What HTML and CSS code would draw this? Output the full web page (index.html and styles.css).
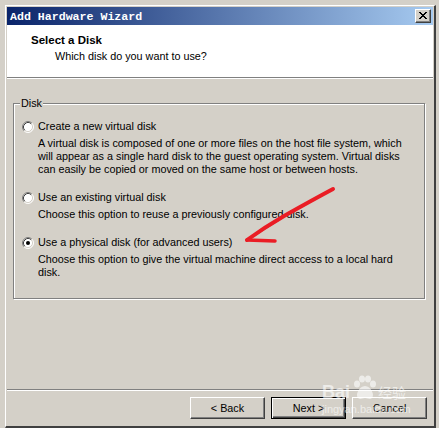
FILE: index.html
```html
<!DOCTYPE html>
<html>
<head>
<meta charset="utf-8">
<link rel="stylesheet" href="styles.css">
</head>
<body>
<div class="desktop">
  <div class="window">
    <div class="titlebar">
      <span class="title">Add Hardware Wizard</span>
      <span class="close">
        <svg width="8" height="7" viewBox="0 0 8 7" shape-rendering="crispEdges">
          <path d="M0 0h2v1h1v1h2v-1h1v-1h2v1h-1v1h-1v1h-1v1h1v1h1v1h1v1h-2v-1h-1v-1h-2v1h-1v1h-2v-1h1v-1h1v-1h1v-1h-1v-1h-1v-1h-1z" fill="#000"/>
        </svg>
      </span>
    </div>
    <div class="header">
      <div class="h-title">Select a Disk</div>
      <div class="h-sub">Which disk do you want to use?</div>
    </div>
    <div class="content">
      <fieldset class="group">
        <legend class="legend">Disk</legend>
        <div class="option">
          <div class="opt-row">
            <svg class="radio" width="12" height="12" viewBox="0 0 12 12">
              <circle cx="6" cy="6" r="5" fill="#fff"/>
              <path d="M2.11 9.89A5.5 5.5 0 0 1 9.89 2.11" stroke="#808080" fill="none"/>
              <path d="M9.89 2.11A5.5 5.5 0 0 1 2.11 9.89" stroke="#fff" fill="none"/>
              <path d="M2.82 9.18A4.5 4.5 0 0 1 9.18 2.82" stroke="#404040" fill="none"/>
              <path d="M9.18 2.82A4.5 4.5 0 0 1 2.82 9.18" stroke="#d4d0c8" fill="none"/>
            </svg>
            <span>Create a new virtual disk</span>
          </div>
          <p class="desc">A virtual disk is composed of one or more files on the host file system, which<br>will appear as a single hard disk to the guest operating system. Virtual disks<br>can easily be copied or moved on the same host or between hosts.</p>
        </div>
        <div class="option">
          <div class="opt-row">
            <svg class="radio" width="12" height="12" viewBox="0 0 12 12">
              <circle cx="6" cy="6" r="5" fill="#fff"/>
              <path d="M2.11 9.89A5.5 5.5 0 0 1 9.89 2.11" stroke="#808080" fill="none"/>
              <path d="M9.89 2.11A5.5 5.5 0 0 1 2.11 9.89" stroke="#fff" fill="none"/>
              <path d="M2.82 9.18A4.5 4.5 0 0 1 9.18 2.82" stroke="#404040" fill="none"/>
              <path d="M9.18 2.82A4.5 4.5 0 0 1 2.82 9.18" stroke="#d4d0c8" fill="none"/>
            </svg>
            <span>Use an existing virtual disk</span>
          </div>
          <p class="desc">Choose this option to reuse a previously configured disk.</p>
        </div>
        <div class="option">
          <div class="opt-row">
            <svg class="radio" width="12" height="12" viewBox="0 0 12 12">
              <circle cx="6" cy="6" r="5" fill="#fff"/>
              <path d="M2.11 9.89A5.5 5.5 0 0 1 9.89 2.11" stroke="#808080" fill="none"/>
              <path d="M9.89 2.11A5.5 5.5 0 0 1 2.11 9.89" stroke="#fff" fill="none"/>
              <path d="M2.82 9.18A4.5 4.5 0 0 1 9.18 2.82" stroke="#404040" fill="none"/>
              <path d="M9.18 2.82A4.5 4.5 0 0 1 2.82 9.18" stroke="#d4d0c8" fill="none"/>
              <circle cx="6" cy="6" r="2" fill="#000"/>
            </svg>
            <span>Use a physical disk (for advanced users)</span>
          </div>
          <p class="desc">Choose this option to give the virtual machine direct access to a local hard<br>disk.</p>
        </div>
      </fieldset>
    </div>
    <div class="footer">
      <span class="btn">&lt; Back</span>
      <span class="btn btn-default">Next &gt;</span>
      <span class="btn">Cancel</span>
    </div>
  </div>

  <svg class="arrow" width="439" height="428" viewBox="0 0 439 428">
    <path d="M333 189 C318 197 300 207 284 216 C272 223 258 232 247 240" stroke="#ea1d25" stroke-width="4" fill="none" stroke-linecap="round" stroke-linejoin="round"/>
    <path d="M322 195 C306 204 292 211 278 220 C270 225 262 230 256 234" stroke="#ea1d25" stroke-width="2.5" fill="none" stroke-linecap="round"/>
    <path d="M247 240 L275 241" stroke="#ea1d25" stroke-width="3.5" fill="none" stroke-linecap="round"/>
  </svg>

  <div class="watermark">
    <div class="wm-top">
      <span class="wm-bai">Bai</span>
      <svg class="wm-paw" width="26" height="26" viewBox="0 0 26 26">
        <ellipse cx="6" cy="9" rx="3" ry="3.6" fill="#fff"/>
        <ellipse cx="11" cy="4" rx="3" ry="3.6" fill="#fff"/>
        <ellipse cx="17" cy="4" rx="3" ry="3.6" fill="#fff"/>
        <ellipse cx="22" cy="9" rx="3" ry="3.6" fill="#fff"/>
        <path d="M14 11 C8 11 4 20 7 23 C9 25 12 23 14 23 C16 23 19 25 21 23 C24 20 20 11 14 11Z" fill="#fff"/>
      </svg>
      <span class="wm-cn">经验</span>
    </div>
    <div class="wm-url">jingyan.baidu.com</div>
  </div>
</div>
</body>
</html>
```
FILE: styles.css
```css
* { box-sizing: border-box; }

body {
  margin: 0;
  background: #d4d0c8;
  font-family: "Liberation Sans", Arial, sans-serif;
  font-size: 10.8px;
  color: #000;
}

.desktop {
  position: relative;
  width: 439px;
  height: 428px;
  overflow: hidden;
  background: #d4d0c8;
  padding: 5px 0 0 5px;
}

.window {
  width: 431px;
  height: 423px;
  background: #d4d0c8;
  border-style: solid;
  border-width: 1px 2px 2px 1px;
  border-color: #fff #404040 #404040 #fff;
  padding: 1px;
  display: flex;
  flex-direction: column;
}

.titlebar {
  height: 18px;
  flex: none;
  display: flex;
  align-items: center;
  background: linear-gradient(to right, #0a246a, #a6caf0);
  padding-left: 3px;
}

.title {
  font-family: "Liberation Mono", "Courier New", monospace;
  font-weight: bold;
  font-size: 11.6px;
  color: #fff;
}

.close {
  margin: 0 2px 0 auto;
  width: 16px;
  height: 14px;
  background: #d4d0c8;
  border: 1px solid;
  border-color: #fff #404040 #404040 #fff;
  box-shadow: inset -1px -1px #808080;
  display: flex;
  align-items: center;
  justify-content: center;
  padding: 0 1px 1px 0;
}

.close svg { display: block; }

.header {
  height: 53px;
  flex: none;
  background: #fff;
  border-bottom: 1px solid #808080;
  padding: 9px 0 0 24px;
}

.h-title {
  font-weight: bold;
  font-size: 11.5px;
  line-height: 13px;
}

.h-sub {
  margin: 3px 0 0 24px;
  line-height: 13px;
}

.content {
  flex: 1;
  border-top: 1px solid #fff;
  padding: 17px 0 0 6px;
}

.group {
  margin: 0;
  width: 412px;
  height: 203px;
  border: 1px solid #808080;
  box-shadow: inset 1px 1px #fff, 1px 1px #fff;
  padding: 10px 8px 0 8px;
  min-inline-size: 0;
}

.legend {
  line-height: 14px;
  padding: 0 1px;
  margin-left: -2px;
  background: #d4d0c8;
}

.option + .option { margin-top: 15px; }

.opt-row {
  display: flex;
  align-items: center;
  gap: 4px;
  height: 13px;
  line-height: 13px;
  white-space: nowrap;
}

.radio { display: block; flex: none; }

.desc {
  margin: 4px 0 0 16px;
  line-height: 13px;
  white-space: nowrap;
}

.footer {
  height: 36px;
  flex: none;
  border-top: 1px solid #808080;
  box-shadow: inset 0 1px #fff;
  padding: 7px 6px 0 0;
  display: flex;
  justify-content: flex-end;
  align-items: flex-start;
  gap: 6px;
}

.btn {
  width: 75px;
  height: 22px;
  display: flex;
  align-items: center;
  justify-content: center;
  background: #d4d0c8;
  border: 1px solid;
  border-color: #fff #404040 #404040 #fff;
  box-shadow: inset -1px -1px #808080;
}

.btn-default {
  border: 1px solid #000;
  box-shadow: inset 1px 1px #fff, inset -1px -1px #404040, inset -2px -2px #808080;
}

.arrow {
  position: absolute;
  left: 0;
  top: 0;
  pointer-events: none;
}

.watermark {
  position: absolute;
  left: 322px;
  top: 373px;
  opacity: 0.6;
  color: #fff;
  pointer-events: none;
}

.wm-top {
  display: flex;
  align-items: flex-end;
  gap: 1px;
  height: 28px;
}

.wm-bai {
  font-family: "Liberation Sans", Arial, sans-serif;
  font-weight: bold;
  font-size: 18px;
  line-height: 18px;
}

.wm-paw { display: block; }

.wm-cn {
  font-family: "Noto Sans CJK SC", sans-serif;
  font-size: 14px;
  line-height: 18px;
}

.wm-url {
  font-family: "Liberation Sans", Arial, sans-serif;
  font-size: 11px;
  line-height: 13px;
  margin-top: 2px;
}
```
